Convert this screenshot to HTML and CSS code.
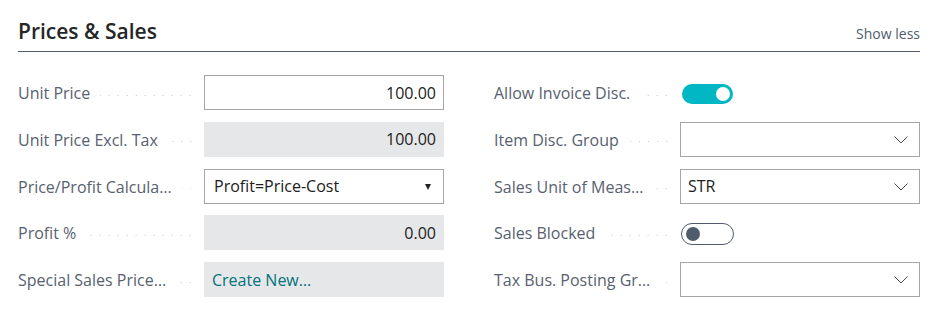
FILE: index.html
```html
<!DOCTYPE html>
<html lang="en">
<head>
  <meta charset="UTF-8">
  <title>Prices &amp; Sales</title>
  <link rel="stylesheet" href="styles.css">
</head>
<body>
  <section class="fasttab">
    <header class="fasttab-header">
      <h2 class="fasttab-title">Prices &amp; Sales</h2>
      <a class="show-less" href="#">Show less</a>
    </header>

    <div class="fields">
      <!-- left column -->
      <div class="column">
        <div class="field">
          <label class="field-label"><span class="caption">Unit Price</span><span class="leader"></span></label>
          <div class="input number">100.00</div>
        </div>
        <div class="field">
          <label class="field-label"><span class="caption">Unit Price Excl. Tax</span><span class="leader"></span></label>
          <div class="input readonly number">100.00</div>
        </div>
        <div class="field">
          <label class="field-label"><span class="caption">Price/Profit Calcula…</span><span class="leader"></span></label>
          <div class="input select">Profit=Price-Cost<span class="triangle"></span></div>
        </div>
        <div class="field">
          <label class="field-label"><span class="caption">Profit %</span><span class="leader"></span></label>
          <div class="input readonly number">0.00</div>
        </div>
        <div class="field">
          <label class="field-label"><span class="caption">Special Sales Price…</span><span class="leader"></span></label>
          <div class="input readonly"><a class="link" href="#">Create New…</a></div>
        </div>
      </div>

      <!-- right column -->
      <div class="column">
        <div class="field">
          <label class="field-label"><span class="caption">Allow Invoice Disc.</span><span class="leader"></span></label>
          <div class="control"><span class="toggle on"><span class="knob"></span></span></div>
        </div>
        <div class="field">
          <label class="field-label"><span class="caption">Item Disc. Group</span><span class="leader"></span></label>
          <div class="input lookup">
            <svg class="chevron" width="14" height="8" viewBox="0 0 14 8"><polyline points="0.5,0.5 7,7 13.5,0.5" fill="none" stroke="#4a4a4a" stroke-width="1"/></svg>
          </div>
        </div>
        <div class="field">
          <label class="field-label"><span class="caption">Sales Unit of Meas…</span><span class="leader"></span></label>
          <div class="input lookup">STR
            <svg class="chevron" width="14" height="8" viewBox="0 0 14 8"><polyline points="0.5,0.5 7,7 13.5,0.5" fill="none" stroke="#4a4a4a" stroke-width="1"/></svg>
          </div>
        </div>
        <div class="field">
          <label class="field-label"><span class="caption">Sales Blocked</span><span class="leader"></span></label>
          <div class="control"><span class="toggle off"><span class="knob"></span></span></div>
        </div>
        <div class="field">
          <label class="field-label"><span class="caption">Tax Bus. Posting Gr…</span><span class="leader"></span></label>
          <div class="input lookup">
            <svg class="chevron" width="14" height="8" viewBox="0 0 14 8"><polyline points="0.5,0.5 7,7 13.5,0.5" fill="none" stroke="#4a4a4a" stroke-width="1"/></svg>
          </div>
        </div>
      </div>
    </div>
  </section>
</body>
</html>
```

FILE: styles.css
```css
* {
  box-sizing: border-box;
}

body {
  margin: 0;
  padding: 0;
  width: 940px;
  background: #ffffff;
  font-family: "Open Sans", "Noto Sans", sans-serif;
  color: #212121;
}

.fasttab {
  margin: 0 20px 0 18px;
}

.fasttab-header {
  display: flex;
  justify-content: space-between;
  align-items: baseline;
  height: 52px;
  padding-top: 18px;
  border-bottom: 1px solid #505c6d;
}

.fasttab-title {
  margin: 0;
  font-size: 21px;
  font-weight: 600;
  line-height: 26px;
  color: #262626;
}

.show-less {
  font-size: 14px;
  color: #505c6d;
  text-decoration: none;
}

.fields {
  display: grid;
  grid-template-columns: 426px 426px;
  column-gap: 50px;
  padding-top: 23px;
}

.column {
  display: flex;
  flex-direction: column;
  gap: 11.75px;
}

.field {
  display: grid;
  grid-template-columns: 186px 240px;
  align-items: center;
  height: 35px;
}

.field-label {
  display: flex;
  align-items: center;
  min-width: 0;
  padding-top: 1px;
  font-size: 16px;
  color: #58616f;
  white-space: nowrap;
}

.leader {
  flex: 1;
  height: 1px;
  margin: 4px 13px 0 10px;
  background-image: linear-gradient(to left, #c4c4c4 1px, transparent 1px);
  background-size: 9px 1px;
  background-position: right center;
  background-repeat: repeat-x;
}

.input {
  position: relative;
  display: flex;
  align-items: center;
  height: 35px;
  padding: 0 7px;
  border: 1px solid #a6a6a6;
  font-size: 16px;
  color: #212121;
  background: #ffffff;
}

.input.readonly {
  border-color: #e6e7e9;
  background: #e6e7e9;
}

.input.number {
  justify-content: flex-end;
}

.input.select {
  padding-left: 9px;
}

.triangle {
  position: absolute;
  right: 12px;
  top: 14px;
  width: 0;
  height: 0;
  border-left: 3.5px solid transparent;
  border-right: 3.5px solid transparent;
  border-top: 6px solid #222222;
}

.chevron {
  position: absolute;
  right: 11px;
  top: 13px;
}

.link {
  color: #00737c;
  text-decoration: none;
}

.control {
  display: flex;
  align-items: center;
  height: 35px;
  padding-top: 3px;
}

.toggle {
  position: relative;
  display: block;
  border-radius: 11px;
}

.toggle.on {
  width: 51px;
  height: 20px;
  margin-left: 2px;
  background: #00b7c3;
}

.toggle.on .knob {
  right: 3px;
  background: #ffffff;
}

.toggle.off {
  width: 53px;
  height: 22px;
  margin-left: 1px;
  border: 1px solid #505c6d;
  background: #ffffff;
}

.toggle.off .knob {
  left: 4px;
  background: #505c6d;
}

.knob {
  position: absolute;
  top: 50%;
  width: 14px;
  height: 14px;
  margin-top: -7px;
  border-radius: 50%;
}
```
